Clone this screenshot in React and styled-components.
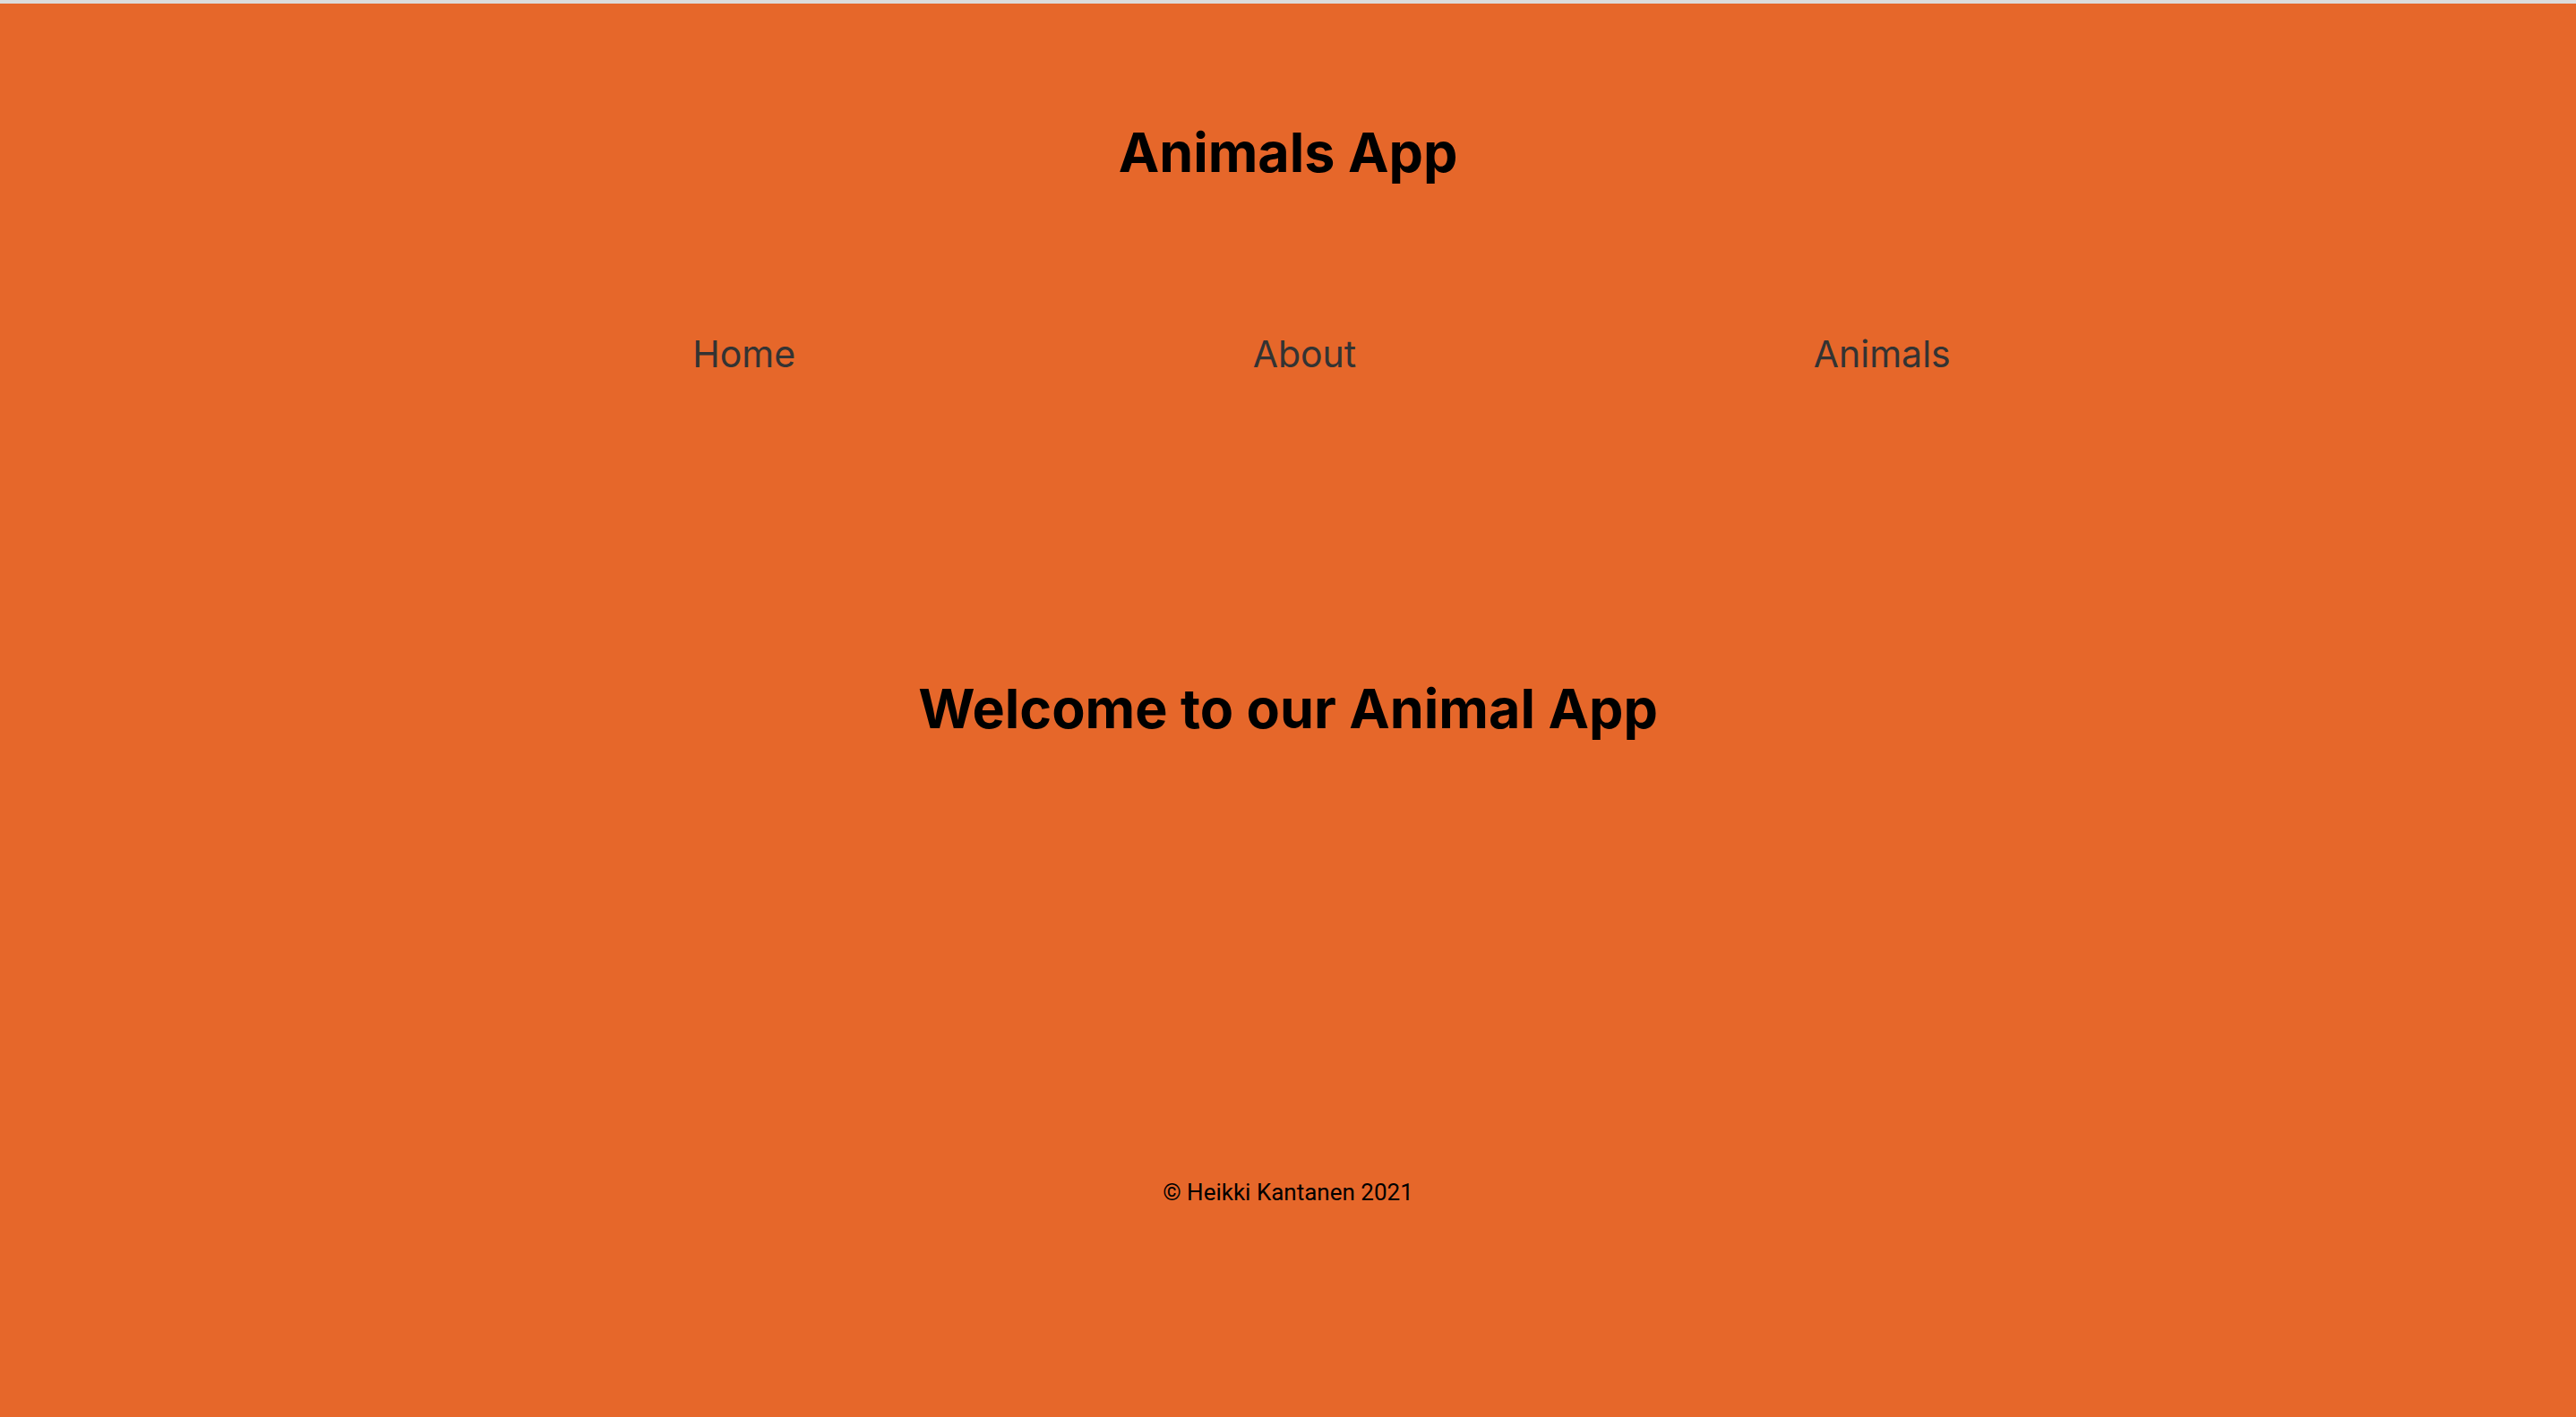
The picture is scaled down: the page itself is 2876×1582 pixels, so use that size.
import React from 'react';
import styled, { createGlobalStyle } from 'styled-components';

const GlobalStyle = createGlobalStyle`
  html, body {
    margin: 0;
    padding: 0;
    background: #e6672a;
  }
  body {
    font-family: Inter, "Noto Sans", sans-serif;
  }
`;

const Page = styled.div`
  min-height: 1582px;
  box-sizing: border-box;
  background: #e6672a;
  border-top: 4px solid #dcdcdc;
  display: flex;
  flex-direction: column;
  align-items: center;
`;

const Header = styled.header`
  width: 100%;
  padding-top: 130px;
  display: flex;
  flex-direction: column;
  align-items: center;
`;

const Title = styled.h1`
  margin: 0;
  font-family: Inter, sans-serif;
  font-size: 61px;
  line-height: 73px;
  font-weight: 700;
  color: #000;
`;

const NavList = styled.ul`
  list-style: none;
  margin: 164px auto 0;
  padding: 0 0 0 75px;
  width: 1915px;
  display: flex;
  justify-content: space-around;
`;

const NavItem = styled.li`
  text-align: center;
`;

const NavLink = styled.a`
  font-family: Inter, sans-serif;
  font-size: 41px;
  line-height: 49px;
  font-weight: 400;
  color: #333;
  text-decoration: none;
`;

const Main = styled.main`
  margin-top: 335px;
  display: flex;
  justify-content: center;
`;

const Welcome = styled.h2`
  margin: 0;
  font-family: Inter, sans-serif;
  font-size: 61px;
  line-height: 73px;
  font-weight: 700;
  color: #000;
`;

const Footer = styled.footer`
  margin-top: 488px;
  font-family: Roboto, sans-serif;
  font-size: 26px;
  line-height: 31px;
  color: #000;
`;

export default function App() {
  const links = ['Home', 'About', 'Animals'];
  return (
    <>
      <GlobalStyle />
      <Page>
        <Header>
          <Title>Animals App</Title>
          <NavList>
            {links.map(l => (
              <NavItem key={l}>
                <NavLink href="#">{l}</NavLink>
              </NavItem>
            ))}
          </NavList>
        </Header>
        <Main>
          <Welcome>Welcome to our Animal App</Welcome>
        </Main>
        <Footer>© Heikki Kantanen 2021</Footer>
      </Page>
    </>
  );
}
